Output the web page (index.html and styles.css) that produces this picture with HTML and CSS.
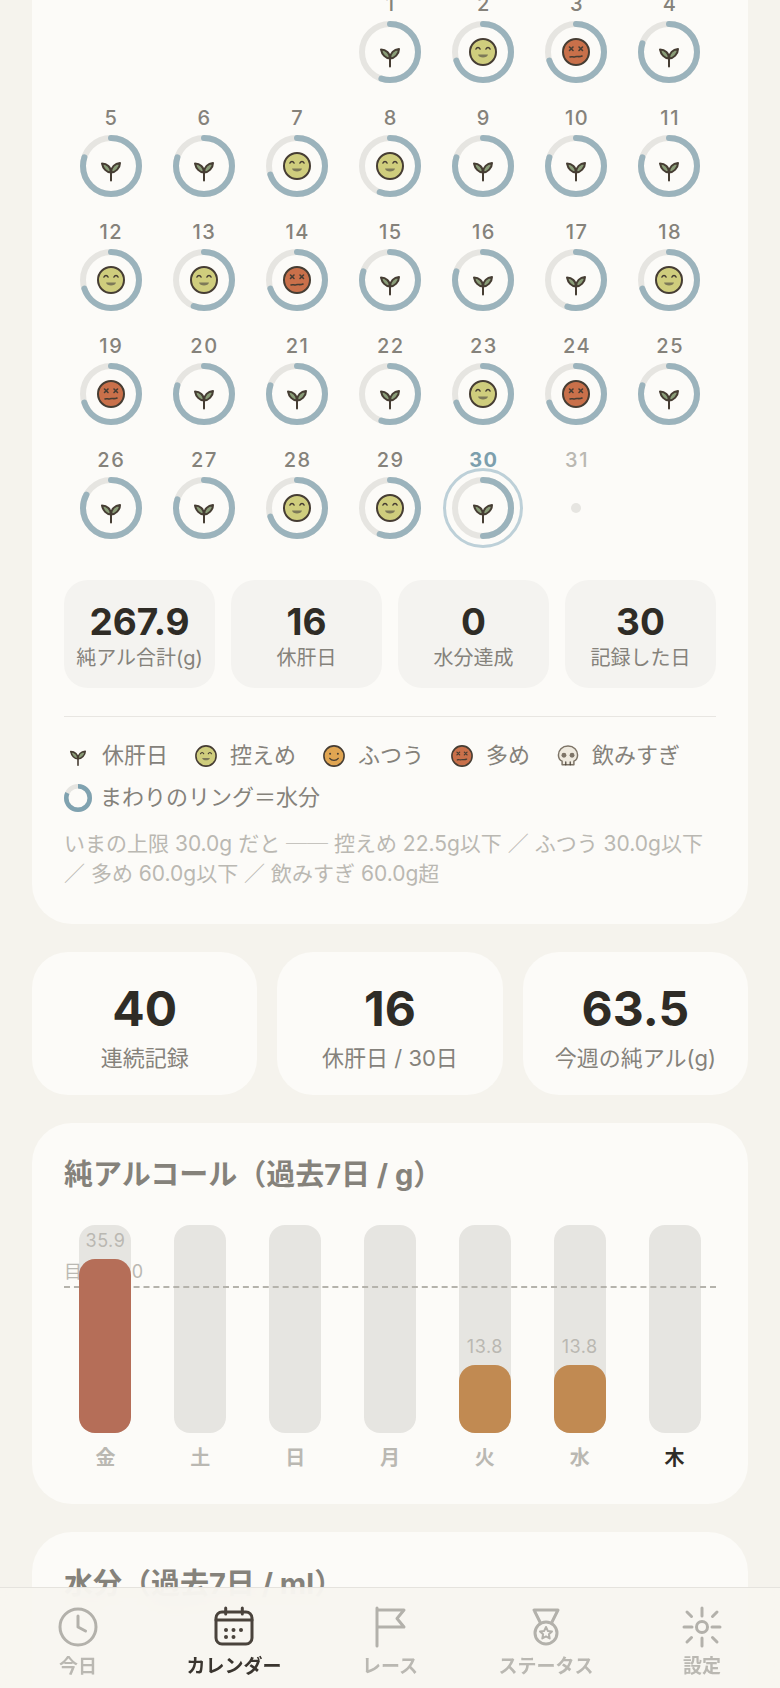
FILE: index.html
```html
<!DOCTYPE html>
<html lang="ja">
<head>
    <meta charset="UTF-8">
    <meta name="viewport" content="width=device-width, initial-scale=1.0">
    <title>カレンダー</title>
    <link rel="stylesheet" href="styles.css">
</head>
<body>
    <!-- アイコン定義 -->
    <svg class="svg-defs">
        <defs>
            <g id="sprout">
                <path class="stem" d="M31 35V45.500"/>
                <path class="leaf" d="M31 37.500C26.500 37.500 23 33.500 22 28.500C27 28.500 31 32 31 37.500Z"/>
                <path class="leaf" d="M31 37.500C31 32 35 28.500 40 28C40 33 35.500 37.500 31 37.500Z"/>
            </g>
            <g id="face-low">
                <circle class="face face-green" cx="31" cy="31" r="13"/>
                <path class="eye" d="M24 28C25 26 27 26 28 28M34 28C35 26 37 26 38 28"/>
                <path class="mouth" d="M26 33.500H36C35.500 37.500 26.500 37.500 26 33.500Z"/>
            </g>
            <g id="face-high">
                <circle class="face face-red" cx="31" cy="31" r="13"/>
                <path class="eye" d="M24.500 26L28 29.500M28 26L24.500 29.500M34 26L37.500 29.500M37.500 26L34 29.500"/>
                <path class="eye" d="M25 36C27 35 28 36.500 30 35.800C32 35 34 36.300 37 35"/>
            </g>
            <g id="face-mid">
                <circle class="face face-orange" cx="31" cy="31" r="13"/>
                <circle class="dot" cx="26" cy="28" r="1.300"/>
                <circle class="dot" cx="36" cy="28" r="1.300"/>
                <path class="eye" d="M25.500 34C28 37.500 34 37.500 36.500 34"/>
            </g>
            <g id="skull">
                <path class="skull" d="M31 17.500C23 17.500 18 23 18 29.500C18 34 20 36.500 23 38V43H39V38C42 36.500 44 34 44 29.500C44 23 39 17.500 31 17.500Z"/>
                <circle class="socket" cx="25.500" cy="30" r="3.300"/>
                <circle class="socket" cx="36.500" cy="30" r="3.300"/>
                <path class="eye" d="M28 43V39M34 43V39"/>
            </g>
        </defs>
    </svg>

    <main class="page">
        <section class="card calendar-card">
            <div class="cal-grid">
                <div class="day day-first"><span class="day-num">1</span><div class="ring-wrap"><svg class="ring" viewBox="0 0 62 62"><circle class="ring-bg" cx="31" cy="31" r="28"/><circle class="ring-val" cx="31" cy="31" r="28" pathLength="100" stroke-dasharray="55 100"/><use href="#sprout"/></svg></div></div>
                <div class="day"><span class="day-num">2</span><div class="ring-wrap"><svg class="ring" viewBox="0 0 62 62"><circle class="ring-bg" cx="31" cy="31" r="28"/><circle class="ring-val" cx="31" cy="31" r="28" pathLength="100" stroke-dasharray="70 100"/><use href="#face-low"/></svg></div></div>
                <div class="day"><span class="day-num">3</span><div class="ring-wrap"><svg class="ring" viewBox="0 0 62 62"><circle class="ring-bg" cx="31" cy="31" r="28"/><circle class="ring-val" cx="31" cy="31" r="28" pathLength="100" stroke-dasharray="70 100"/><use href="#face-high"/></svg></div></div>
                <div class="day"><span class="day-num">4</span><div class="ring-wrap"><svg class="ring" viewBox="0 0 62 62"><circle class="ring-bg" cx="31" cy="31" r="28"/><circle class="ring-val" cx="31" cy="31" r="28" pathLength="100" stroke-dasharray="80 100"/><use href="#sprout"/></svg></div></div>

                <div class="day"><span class="day-num">5</span><div class="ring-wrap"><svg class="ring" viewBox="0 0 62 62"><circle class="ring-bg" cx="31" cy="31" r="28"/><circle class="ring-val" cx="31" cy="31" r="28" pathLength="100" stroke-dasharray="80 100"/><use href="#sprout"/></svg></div></div>
                <div class="day"><span class="day-num">6</span><div class="ring-wrap"><svg class="ring" viewBox="0 0 62 62"><circle class="ring-bg" cx="31" cy="31" r="28"/><circle class="ring-val" cx="31" cy="31" r="28" pathLength="100" stroke-dasharray="80 100"/><use href="#sprout"/></svg></div></div>
                <div class="day"><span class="day-num">7</span><div class="ring-wrap"><svg class="ring" viewBox="0 0 62 62"><circle class="ring-bg" cx="31" cy="31" r="28"/><circle class="ring-val" cx="31" cy="31" r="28" pathLength="100" stroke-dasharray="70 100"/><use href="#face-low"/></svg></div></div>
                <div class="day"><span class="day-num">8</span><div class="ring-wrap"><svg class="ring" viewBox="0 0 62 62"><circle class="ring-bg" cx="31" cy="31" r="28"/><circle class="ring-val" cx="31" cy="31" r="28" pathLength="100" stroke-dasharray="56 100"/><use href="#face-low"/></svg></div></div>
                <div class="day"><span class="day-num">9</span><div class="ring-wrap"><svg class="ring" viewBox="0 0 62 62"><circle class="ring-bg" cx="31" cy="31" r="28"/><circle class="ring-val" cx="31" cy="31" r="28" pathLength="100" stroke-dasharray="80 100"/><use href="#sprout"/></svg></div></div>
                <div class="day"><span class="day-num">10</span><div class="ring-wrap"><svg class="ring" viewBox="0 0 62 62"><circle class="ring-bg" cx="31" cy="31" r="28"/><circle class="ring-val" cx="31" cy="31" r="28" pathLength="100" stroke-dasharray="80 100"/><use href="#sprout"/></svg></div></div>
                <div class="day"><span class="day-num">11</span><div class="ring-wrap"><svg class="ring" viewBox="0 0 62 62"><circle class="ring-bg" cx="31" cy="31" r="28"/><circle class="ring-val" cx="31" cy="31" r="28" pathLength="100" stroke-dasharray="80 100"/><use href="#sprout"/></svg></div></div>

                <div class="day"><span class="day-num">12</span><div class="ring-wrap"><svg class="ring" viewBox="0 0 62 62"><circle class="ring-bg" cx="31" cy="31" r="28"/><circle class="ring-val" cx="31" cy="31" r="28" pathLength="100" stroke-dasharray="70 100"/><use href="#face-low"/></svg></div></div>
                <div class="day"><span class="day-num">13</span><div class="ring-wrap"><svg class="ring" viewBox="0 0 62 62"><circle class="ring-bg" cx="31" cy="31" r="28"/><circle class="ring-val" cx="31" cy="31" r="28" pathLength="100" stroke-dasharray="56 100"/><use href="#face-low"/></svg></div></div>
                <div class="day"><span class="day-num">14</span><div class="ring-wrap"><svg class="ring" viewBox="0 0 62 62"><circle class="ring-bg" cx="31" cy="31" r="28"/><circle class="ring-val" cx="31" cy="31" r="28" pathLength="100" stroke-dasharray="70 100"/><use href="#face-high"/></svg></div></div>
                <div class="day"><span class="day-num">15</span><div class="ring-wrap"><svg class="ring" viewBox="0 0 62 62"><circle class="ring-bg" cx="31" cy="31" r="28"/><circle class="ring-val" cx="31" cy="31" r="28" pathLength="100" stroke-dasharray="80 100"/><use href="#sprout"/></svg></div></div>
                <div class="day"><span class="day-num">16</span><div class="ring-wrap"><svg class="ring" viewBox="0 0 62 62"><circle class="ring-bg" cx="31" cy="31" r="28"/><circle class="ring-val" cx="31" cy="31" r="28" pathLength="100" stroke-dasharray="80 100"/><use href="#sprout"/></svg></div></div>
                <div class="day"><span class="day-num">17</span><div class="ring-wrap"><svg class="ring" viewBox="0 0 62 62"><circle class="ring-bg" cx="31" cy="31" r="28"/><circle class="ring-val" cx="31" cy="31" r="28" pathLength="100" stroke-dasharray="55 100"/><use href="#sprout"/></svg></div></div>
                <div class="day"><span class="day-num">18</span><div class="ring-wrap"><svg class="ring" viewBox="0 0 62 62"><circle class="ring-bg" cx="31" cy="31" r="28"/><circle class="ring-val" cx="31" cy="31" r="28" pathLength="100" stroke-dasharray="70 100"/><use href="#face-low"/></svg></div></div>

                <div class="day"><span class="day-num">19</span><div class="ring-wrap"><svg class="ring" viewBox="0 0 62 62"><circle class="ring-bg" cx="31" cy="31" r="28"/><circle class="ring-val" cx="31" cy="31" r="28" pathLength="100" stroke-dasharray="70 100"/><use href="#face-high"/></svg></div></div>
                <div class="day"><span class="day-num">20</span><div class="ring-wrap"><svg class="ring" viewBox="0 0 62 62"><circle class="ring-bg" cx="31" cy="31" r="28"/><circle class="ring-val" cx="31" cy="31" r="28" pathLength="100" stroke-dasharray="80 100"/><use href="#sprout"/></svg></div></div>
                <div class="day"><span class="day-num">21</span><div class="ring-wrap"><svg class="ring" viewBox="0 0 62 62"><circle class="ring-bg" cx="31" cy="31" r="28"/><circle class="ring-val" cx="31" cy="31" r="28" pathLength="100" stroke-dasharray="80 100"/><use href="#sprout"/></svg></div></div>
                <div class="day"><span class="day-num">22</span><div class="ring-wrap"><svg class="ring" viewBox="0 0 62 62"><circle class="ring-bg" cx="31" cy="31" r="28"/><circle class="ring-val" cx="31" cy="31" r="28" pathLength="100" stroke-dasharray="55 100"/><use href="#sprout"/></svg></div></div>
                <div class="day"><span class="day-num">23</span><div class="ring-wrap"><svg class="ring" viewBox="0 0 62 62"><circle class="ring-bg" cx="31" cy="31" r="28"/><circle class="ring-val" cx="31" cy="31" r="28" pathLength="100" stroke-dasharray="70 100"/><use href="#face-low"/></svg></div></div>
                <div class="day"><span class="day-num">24</span><div class="ring-wrap"><svg class="ring" viewBox="0 0 62 62"><circle class="ring-bg" cx="31" cy="31" r="28"/><circle class="ring-val" cx="31" cy="31" r="28" pathLength="100" stroke-dasharray="70 100"/><use href="#face-high"/></svg></div></div>
                <div class="day"><span class="day-num">25</span><div class="ring-wrap"><svg class="ring" viewBox="0 0 62 62"><circle class="ring-bg" cx="31" cy="31" r="28"/><circle class="ring-val" cx="31" cy="31" r="28" pathLength="100" stroke-dasharray="80 100"/><use href="#sprout"/></svg></div></div>

                <div class="day"><span class="day-num">26</span><div class="ring-wrap"><svg class="ring" viewBox="0 0 62 62"><circle class="ring-bg" cx="31" cy="31" r="28"/><circle class="ring-val" cx="31" cy="31" r="28" pathLength="100" stroke-dasharray="83 100"/><use href="#sprout"/></svg></div></div>
                <div class="day"><span class="day-num">27</span><div class="ring-wrap"><svg class="ring" viewBox="0 0 62 62"><circle class="ring-bg" cx="31" cy="31" r="28"/><circle class="ring-val" cx="31" cy="31" r="28" pathLength="100" stroke-dasharray="80 100"/><use href="#sprout"/></svg></div></div>
                <div class="day"><span class="day-num">28</span><div class="ring-wrap"><svg class="ring" viewBox="0 0 62 62"><circle class="ring-bg" cx="31" cy="31" r="28"/><circle class="ring-val" cx="31" cy="31" r="28" pathLength="100" stroke-dasharray="70 100"/><use href="#face-low"/></svg></div></div>
                <div class="day"><span class="day-num">29</span><div class="ring-wrap"><svg class="ring" viewBox="0 0 62 62"><circle class="ring-bg" cx="31" cy="31" r="28"/><circle class="ring-val" cx="31" cy="31" r="28" pathLength="100" stroke-dasharray="56 100"/><use href="#face-low"/></svg></div></div>
                <div class="day day-today"><span class="day-num">30</span><div class="ring-wrap"><svg class="ring" viewBox="0 0 62 62"><circle class="ring-bg" cx="31" cy="31" r="28"/><circle class="ring-val" cx="31" cy="31" r="28" pathLength="100" stroke-dasharray="50 100"/><use href="#sprout"/></svg></div></div>
                <div class="day day-future"><span class="day-num">31</span><div class="ring-wrap"><span class="future-dot"></span></div></div>
            </div>

            <div class="chip-row">
                <div class="chip"><div class="chip-num">267.9</div><div class="chip-label">純アル合計(g)</div></div>
                <div class="chip"><div class="chip-num">16</div><div class="chip-label">休肝日</div></div>
                <div class="chip"><div class="chip-num">0</div><div class="chip-label">水分達成</div></div>
                <div class="chip"><div class="chip-num">30</div><div class="chip-label">記録した日</div></div>
            </div>

            <div class="divider"></div>

            <div class="legend">
                <div class="legend-item"><svg class="legend-icon" viewBox="13.500 16.500 35 35"><use href="#sprout"/></svg>休肝日</div>
                <div class="legend-item"><svg class="legend-icon" viewBox="13 13 36 36"><use href="#face-low"/></svg>控えめ</div>
                <div class="legend-item"><svg class="legend-icon" viewBox="13 13 36 36"><use href="#face-mid"/></svg>ふつう</div>
                <div class="legend-item"><svg class="legend-icon" viewBox="13 13 36 36"><use href="#face-high"/></svg>多め</div>
                <div class="legend-item"><svg class="legend-icon" viewBox="12 12 38 38"><use href="#skull"/></svg>飲みすぎ</div>
                <div class="legend-item legend-item-ring"><svg class="legend-icon" viewBox="0 0 28 28"><circle class="legend-ring-bg" cx="14" cy="14" r="11.750"/><circle class="legend-ring-val" cx="14" cy="14" r="11.750" pathLength="100" stroke-dasharray="82 100"/></svg>まわりのリング＝水分</div>
            </div>

            <p class="note">いまの上限 30.0g だと ── 控えめ 22.5g以下 ／ ふつう 30.0g以下 ／ 多め 60.0g以下 ／ 飲みすぎ 60.0g超</p>
        </section>

        <section class="stat-row">
            <div class="card stat-card"><div class="stat-num">40</div><div class="stat-label">連続記録</div></div>
            <div class="card stat-card"><div class="stat-num">16</div><div class="stat-label">休肝日 / 30日</div></div>
            <div class="card stat-card"><div class="stat-num">63.5</div><div class="stat-label">今週の純アル(g)</div></div>
        </section>

        <section class="card chart-card">
            <h2 class="chart-title">純アルコール（過去7日 / g）</h2>
            <div class="chart">
                <span class="goal-label">目標 30.0</span>
                <div class="goal-line"></div>
                <div class="bar-col">
                    <div class="bar-track"><span class="bar-val">35.9</span><div class="bar-fill bar-over" style="height: 174px"></div></div>
                    <span class="bar-day">金</span>
                </div>
                <div class="bar-col"><div class="bar-track"></div><span class="bar-day">土</span></div>
                <div class="bar-col"><div class="bar-track"></div><span class="bar-day">日</span></div>
                <div class="bar-col"><div class="bar-track"></div><span class="bar-day">月</span></div>
                <div class="bar-col">
                    <div class="bar-track"><span class="bar-val">13.8</span><div class="bar-fill bar-ok" style="height: 68px"></div></div>
                    <span class="bar-day">火</span>
                </div>
                <div class="bar-col">
                    <div class="bar-track"><span class="bar-val">13.8</span><div class="bar-fill bar-ok" style="height: 68px"></div></div>
                    <span class="bar-day">水</span>
                </div>
                <div class="bar-col"><div class="bar-track"></div><span class="bar-day bar-day-now">木</span></div>
            </div>
        </section>

        <section class="card chart-card chart-card-next">
            <h2 class="chart-title">水分（過去7日 / ml）</h2>
        </section>
    </main>

    <nav class="tab-bar">
        <div class="tab">
            <svg class="tab-icon" viewBox="0 0 44 44"><circle cx="22" cy="22" r="18"/><path d="M22 11V22L29.500 26"/></svg>
            <span>今日</span>
        </div>
        <div class="tab tab-active">
            <svg class="tab-icon" viewBox="0 0 44 44"><rect x="4" y="7" width="36" height="32" rx="6"/><path d="M4 15H40M13.700 3V9M30.300 3V9"/><g class="tab-dots"><circle cx="14" cy="25" r="2"/><circle cx="21.500" cy="25" r="2"/><circle cx="29" cy="25" r="2"/><circle cx="14" cy="32" r="2"/><circle cx="21.500" cy="32" r="2"/></g></svg>
            <span>カレンダー</span>
        </div>
        <div class="tab">
            <svg class="tab-icon" viewBox="0 0 44 44"><path d="M9 41V3M9 5H36L29 13.500L36 22H9"/></svg>
            <span>レース</span>
        </div>
        <div class="tab">
            <svg class="tab-icon" viewBox="0 0 44 44"><circle cx="22" cy="28" r="11"/><path d="M10 5H34L27.500 18M16.500 18L10 5"/><path class="tab-star" d="M22 22L23.800 25.900L28 26.400L24.900 29.200L25.700 33.500L22 31.400L18.300 33.500L19.100 29.200L16 26.400L20.200 25.900Z"/></svg>
            <span>ステータス</span>
        </div>
        <div class="tab">
            <svg class="tab-icon" viewBox="0 0 44 44"><circle cx="22" cy="22" r="5.500"/><path d="M22 3V11M22 33V41M4 22H12M32 22H40M7 7L11.500 11.500M32.500 32.500L37 37M7 37L11.500 32.500M32.500 11.500L37 7"/></svg>
            <span>設定</span>
        </div>
    </nav>
</body>
</html>
```

FILE: styles.css
```css
:root {
    --bg-color: #f5f3ed;
    --card-color: #fcfbf8;
    --chip-color: #f4f3f0;
    --text-color: #2f2c26;
    --sub-text: #85827b;
    --light-text: #bab8b2;
    --track-color: #e6e5e1;
    --water-color: #9bb3bc;
    --line-color: #463d33;
}

* {
    margin: 0;
    padding: 0;
    box-sizing: border-box;
}

html,
body {
    height: 100%;
    overflow: hidden;
}

body {
    background-color: var(--bg-color);
    color: var(--text-color);
    font-family: Inter, "Noto Sans CJK JP", sans-serif;
}

.svg-defs {
    display: none;
}

/* ページは途中までスクロールした状態 */
.page {
    display: flex;
    flex-direction: column;
    gap: 28px;
    margin-top: -40px;
    padding: 0 32px;
}

.card {
    background-color: var(--card-color);
    border-radius: 40px;
}

.calendar-card {
    padding: 32px 32px 35px;
}

/* カレンダー */
.cal-grid {
    display: grid;
    grid-template-columns: repeat(7, 1fr);
    gap: 23px 0;
}

.day {
    display: flex;
    flex-direction: column;
    align-items: center;
    gap: 5px;
}

.day-first {
    grid-column-start: 4;
}

.day-num {
    margin-left: 1.5px;
    font-size: 20px;
    line-height: 24px;
    font-weight: 500;
    letter-spacing: 1.5px;
    color: var(--sub-text);
}

.ring-wrap {
    position: relative;
    display: flex;
    align-items: center;
    justify-content: center;
    width: 62px;
    height: 62px;
}

.ring {
    display: block;
    width: 62px;
    height: 62px;
}

.ring-bg,
.ring-val {
    fill: none;
    stroke-width: 6;
}

.ring-bg {
    stroke: var(--track-color);
}

.ring-val {
    stroke: var(--water-color);
    stroke-linecap: round;
    transform: rotate(-90deg);
    transform-origin: center;
}

.day-today .day-num {
    color: #7d9fad;
    font-weight: 700;
}

.day-today .ring-wrap::after {
    content: "";
    position: absolute;
    inset: -9px;
    border: 3px solid #bdd0d8;
    border-radius: 50%;
}

.day-future .day-num {
    color: var(--light-text);
}

.future-dot {
    width: 10px;
    height: 10px;
    border-radius: 50%;
    background-color: var(--track-color);
}

/* アイコンの線と塗り */
.stem,
.leaf,
.eye,
.mouth {
    stroke: var(--line-color);
    stroke-width: 2;
    stroke-linecap: round;
    stroke-linejoin: round;
    fill: none;
}

.leaf {
    fill: #8a9d78;
}

.mouth {
    fill: #7d7958;
    stroke: none;
}

.eye {
    stroke-width: 1.6;
}

.face {
    stroke: var(--line-color);
    stroke-width: 2;
}

.face-green {
    fill: #cfcd7d;
}

.face-red {
    fill: #c9704a;
}

.face-orange {
    fill: #e0a552;
}

.dot,
.socket {
    fill: var(--line-color);
}

.socket {
    fill: #7d7467;
}

.skull {
    fill: #efeadf;
    stroke: #7d7467;
    stroke-width: 2;
    stroke-linejoin: round;
}

/* 月のまとめ */
.chip-row {
    display: grid;
    grid-template-columns: repeat(4, 1fr);
    gap: 16px;
    margin-top: 41px;
}

.chip {
    height: 108px;
    padding-top: 22px;
    background-color: var(--chip-color);
    border-radius: 24px;
    text-align: center;
}

.chip-num {
    font-size: 37px;
    line-height: 40px;
    font-weight: 700;
}

.chip-label {
    margin-top: 3px;
    font-size: 20px;
    line-height: 26px;
    color: var(--sub-text);
}

.divider {
    height: 1px;
    margin-top: 28px;
    background-color: #e8e6e2;
}

/* 凡例 */
.legend {
    display: flex;
    flex-wrap: wrap;
    gap: 14px 24px;
    margin-top: 24px;
}

.legend-item {
    display: flex;
    align-items: center;
    gap: 10px;
    height: 28px;
    padding-bottom: 4px;
    font-size: 22px;
    color: var(--sub-text);
}

.legend-item-ring {
    gap: 8px;
}

.legend-icon {
    width: 28px;
    height: 28px;
    margin-top: 5px;
}

.legend-ring-bg,
.legend-ring-val {
    fill: none;
    stroke-width: 4.5;
}

.legend-ring-bg {
    stroke: var(--track-color);
}

.legend-ring-val {
    stroke: #7fa2b0;
    transform: rotate(-90deg);
    transform-origin: center;
}

.note {
    margin-top: 18px;
    font-size: 21px;
    line-height: 30px;
    color: var(--light-text);
}

/* 集計カード */
.stat-row {
    display: grid;
    grid-template-columns: repeat(3, 1fr);
    gap: 20px;
}

.stat-card {
    height: 143px;
    padding-top: 29px;
    border-radius: 36px;
    text-align: center;
}

.stat-num {
    font-size: 48px;
    line-height: 56px;
    font-weight: 700;
}

.stat-label {
    margin-top: 7px;
    font-size: 22px;
    line-height: 28px;
    color: var(--sub-text);
}

/* グラフ */
.chart-card {
    padding: 32px 32px 32px;
}

.chart-title {
    font-size: 29px;
    line-height: 40px;
    font-weight: 700;
    color: var(--sub-text);
}

.chart {
    position: relative;
    display: grid;
    grid-template-columns: repeat(7, 1fr);
    gap: 12px;
    margin-top: 30px;
}

.goal-label {
    position: absolute;
    left: 0;
    top: 35px;
    font-size: 18px;
    line-height: 24px;
    color: var(--light-text);
}

.goal-line {
    position: absolute;
    left: 0;
    right: 0;
    top: 61px;
    z-index: 1;
    border-top: 2px dashed #b5b3ac;
}

.bar-col {
    display: flex;
    flex-direction: column;
    align-items: center;
    gap: 11px;
}

.bar-track {
    display: flex;
    flex-direction: column;
    justify-content: flex-end;
    width: 52px;
    height: 208px;
    background-color: var(--track-color);
    border-radius: 16px;
}

.bar-val {
    margin-bottom: 6px;
    font-size: 18px;
    line-height: 24px;
    letter-spacing: 0.5px;
    text-align: center;
    color: var(--light-text);
}

.bar-fill {
    position: relative;
    z-index: 2;
    border-radius: 16px;
}

.bar-over {
    background-color: #b56e58;
}

.bar-ok {
    background-color: #c18a52;
}

.bar-day {
    font-size: 20px;
    line-height: 28px;
    font-weight: 700;
    color: var(--light-text);
}

.bar-day-now {
    color: var(--text-color);
}

.chart-card-next {
    height: 400px;
}

/* 下のタブバー */
.tab-bar {
    position: fixed;
    left: 0;
    right: 0;
    bottom: 0;
    z-index: 10;
    display: grid;
    grid-template-columns: repeat(5, 1fr);
    height: 101px;
    padding-top: 17px;
    background-color: rgba(247, 245, 240, 0.93);
    border-top: 1px solid #e5e3de;
    backdrop-filter: blur(16px);
}

.tab {
    display: flex;
    flex-direction: column;
    align-items: center;
    gap: 5px;
    font-size: 19px;
    line-height: 26px;
    font-weight: 600;
    color: var(--light-text);
}

.tab-icon {
    width: 44px;
    height: 44px;
    fill: none;
    stroke: #b3b1ab;
    stroke-width: 3;
    stroke-linecap: round;
    stroke-linejoin: round;
}

.tab-star {
    stroke-width: 2;
}

.tab-active {
    font-weight: 700;
    color: #3a352f;
}

.tab-active .tab-icon {
    stroke: #4a433c;
}

.tab-dots circle {
    fill: #4a433c;
    stroke: none;
}
```
